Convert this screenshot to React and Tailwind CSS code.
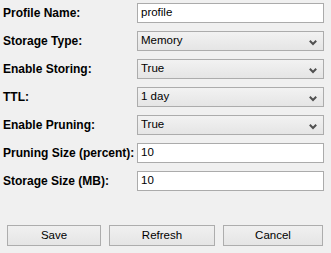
import React from "react";

const Chevron = () => (
  <svg width="8" height="6" viewBox="0 0 8 6" className="absolute right-[6px] top-[8px]">
    <polyline points="0.8,0.8 4,4 7.2,0.8" fill="none" stroke="#505050" strokeWidth="2" />
  </svg>
);

const Field = ({ label, value, select }) => (
  <div className="flex items-center h-[20px]">
    <div className="w-[137px] pl-[3px] font-bold text-[12px] text-black leading-none">{label}</div>
    {select ? (
      <div className="relative w-[187px] h-[20px] border border-[#acacac] bg-gradient-to-b from-[#f2f2f2] to-[#e5e5e5] flex items-center pl-[3px] text-[11.5px] text-black">
        {value}
        <Chevron />
      </div>
    ) : (
      <div className="w-[187px] h-[20px] border border-[#ababab] bg-white flex items-center pl-[3px] text-[11.5px] text-black">
        {value}
      </div>
    )}
  </div>
);

const Btn = ({ children, w }) => (
  <div className={`${w} h-[21px] border border-[#adadad] bg-gradient-to-b from-[#f0f0f0] to-[#e5e5e5] flex items-center justify-center text-[11.5px] text-black`}>
    {children}
  </div>
);

export default function App() {
  return (
    <div className="w-[331px] h-[253px] bg-[#f0f0f0] pt-[3px] flex flex-col" style={{ fontFamily: '"Liberation Sans", Arial, sans-serif' }}>
      <div className="flex flex-col gap-[8px]">
        <Field label="Profile Name:" value="profile" />
        <Field label="Storage Type:" value="Memory" select />
        <Field label="Enable Storing:" value="True" select />
        <Field label="TTL:" value="1 day" select />
        <Field label="Enable Pruning:" value="True" select />
        <Field label="Pruning Size (percent):" value="10" />
        <Field label="Storage Size (MB):" value="10" />
      </div>
      <div className="flex mt-[34px] pl-[7px] gap-[8px]">
        <Btn w="w-[94px]">Save</Btn>
        <Btn w="w-[106px]">Refresh</Btn>
        <Btn w="w-[100px]">Cancel</Btn>
      </div>
    </div>
  );
}
